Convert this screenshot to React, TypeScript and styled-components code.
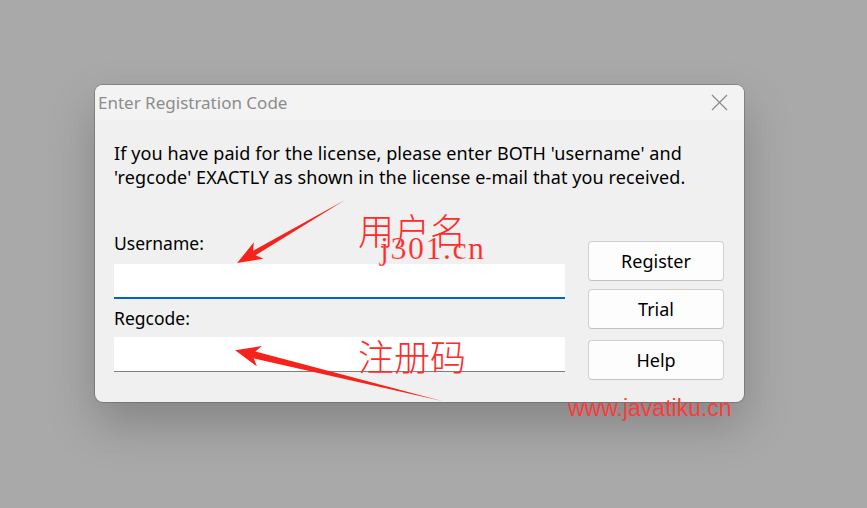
import React from 'react';
import styled, { createGlobalStyle } from 'styled-components';

const GlobalStyle = createGlobalStyle`
  html, body {
    margin: 0;
    padding: 0;
    background: #a9a9a9;
  }
  body {
    width: 867px;
    height: 508px;
    overflow: hidden;
    font-family: 'Noto Sans', 'Open Sans', sans-serif;
  }
`;

const Page = styled.div`
  position: relative;
  width: 867px;
  height: 508px;
  box-sizing: border-box;
  padding: 85px 0 0 95px;
`;

const Dialog = styled.div`
  width: 649px;
  height: 317px;
  box-sizing: border-box;
  border-radius: 8px;
  background: #f0f0f0;
  overflow: hidden;
  display: flex;
  flex-direction: column;
  box-shadow: 0 0 0 1px rgba(90, 90, 90, 0.45), 0 22px 48px rgba(0, 0, 0, 0.22);
`;

const TitleBar = styled.div`
  height: 35px;
  flex: none;
  display: flex;
  align-items: center;
  justify-content: space-between;
  background: #f3f3f3;
  padding: 0 16px 0 3px;
`;

const Title = styled.span`
  font-size: 17px;
  color: #8c8c8c;
`;

const Close = styled.div`
  width: 17px;
  height: 17px;
  display: flex;
  svg {
    display: block;
  }
`;

const Body = styled.div`
  flex: 1;
  padding: 21px 20px 0 19px;
`;

const Intro = styled.p`
  margin: 0;
  font-size: 18px;
  letter-spacing: 0.1px;
  line-height: 24px;
  color: #000;
`;

const FormRow = styled.div`
  display: flex;
  align-items: flex-start;
  gap: 23px;
  margin-top: 42px;
`;

const Fields = styled.div`
  width: 451px;
  display: flex;
  flex-direction: column;
`;

const Label = styled.label<{ $first?: boolean }>`
  font-size: 17.5px;
  line-height: 24px;
  color: #000;
  margin-top: ${p => (p.$first ? '0' : '7px')};
`;

const Field = styled.input<{ $focused?: boolean }>`
  box-sizing: border-box;
  width: 100%;
  height: 35px;
  margin-top: ${p => (p.$focused ? '9px' : '7px')};
  border: none;
  border-bottom: ${p => (p.$focused ? '2px solid #0067c0' : '1px solid #7d7d7d')};
  background: #fff;
  font: inherit;
  outline: none;
  padding: 0 8px;
`;

const Buttons = styled.div`
  width: 136px;
  display: flex;
  flex-direction: column;
  margin-top: 10px;
`;

const Button = styled.button<{ $gap: number }>`
  height: 40px;
  margin-top: ${p => p.$gap}px;
  border: 1px solid #cfcfcf;
  border-bottom-color: #c2c2c2;
  border-radius: 4px;
  background: #fdfdfd;
  font-family: inherit;
  font-size: 18px;
  color: #000;
  padding: 0;
`;

const Overlay = styled.div`
  position: absolute;
  inset: 0;
  pointer-events: none;
`;

const Note = styled.span<{ $x: number; $y: number }>`
  position: absolute;
  left: ${p => p.$x}px;
  top: ${p => p.$y}px;
  color: #ff2b2b;
  white-space: nowrap;
`;

const CnNote = styled(Note)`
  font-family: 'Noto Sans CJK SC', sans-serif;
  font-size: 36px;
  font-weight: 300;
  line-height: 1;
`;

const SiteMark = styled(Note)`
  font-family: 'Liberation Serif', serif;
  font-size: 32px;
  letter-spacing: 1.5px;
  line-height: 1;
  -webkit-text-stroke: 0.2px #f0f0f0;
`;

const WebMark = styled(Note)`
  font-family: 'Liberation Sans', sans-serif;
  font-size: 23px;
  line-height: 1;
  color: #ff3a3a;
`;

// tapered screenshot-tool arrow, tail at (x,y), pointing at angle deg
const Arrow = ({ x, y, len, angle, w = 3 }: { x: number; y: number; len: number; angle: number; w?: number }) => (
  <g transform={`translate(${x} ${y}) rotate(${angle})`}>
    <polygon
      points={`0,0 ${len - 20},${-w} ${len - 25},${-w - 7} ${len},0 ${len - 25},${w + 7} ${len - 20},${w}`}
      fill="#f5231b"
    />
  </g>
);

export default function App() {
  return (
    <>
      <GlobalStyle />
      <Page>
        <Dialog>
          <TitleBar>
            <Title>Enter Registration Code</Title>
            <Close>
              <svg width="17" height="17" viewBox="0 0 17 17">
                <path d="M1 1L16 16M16 1L1 16" stroke="#8a8a8a" strokeWidth="1.2" fill="none" />
              </svg>
            </Close>
          </TitleBar>
          <Body>
            <Intro>
              If you have paid for the license, please enter BOTH 'username' and
              <br />
              'regcode' EXACTLY as shown in the license e-mail that you received.
            </Intro>
            <FormRow>
              <Fields>
                <Label $first>Username:</Label>
                <Field $focused />
                <Label>Regcode:</Label>
                <Field />
              </Fields>
              <Buttons>
                <Button $gap={0}>Register</Button>
                <Button $gap={8}>Trial</Button>
                <Button $gap={11}>Help</Button>
              </Buttons>
            </FormRow>
          </Body>
        </Dialog>
        <Overlay>
          <svg width="867" height="508" style={{ position: 'absolute', left: 0, top: 0 }}>
            <Arrow x={345} y={200} len={125} angle={149.7} w={2.5} />
            <Arrow x={442} y={401} len={213} angle={-166.2} w={3.5} />
          </svg>
          <CnNote $x={358} $y={211}>用户名</CnNote>
          <SiteMark $x={380} $y={232}>j301.cn</SiteMark>
          <CnNote $x={358} $y={337}>注册码</CnNote>
          <WebMark $x={568} $y={397}>www.javatiku.cn</WebMark>
        </Overlay>
      </Page>
    </>
  );
}
